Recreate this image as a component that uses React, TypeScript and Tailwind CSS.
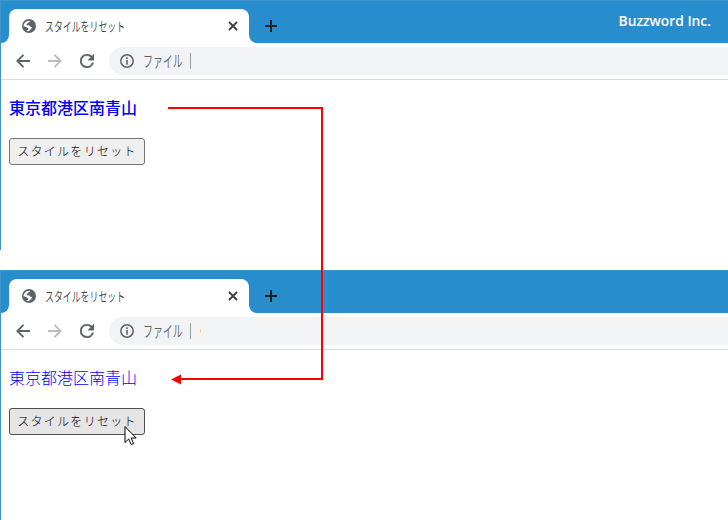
import React from 'react';

function Globe() {
  return (
    <svg className="h-[14px] w-[14px] shrink-0" viewBox="0 0 14 14">
      <circle cx="7" cy="7" r="7" fill="#5f6368" />
      <path d="M8.300 1.900C7.500 3 6.300 2.900 5.900 3.900C5.500 4.700 4.400 4.700 4.500 5.700C4.700 6.600 6.200 6 7.200 6.400C8.200 6.700 7.900 7.900 9 8C10.100 8.100 10.400 8.400 9.600 9.300C8.600 10.200 8.300 11.600 6.300 12.300C5.400 12.100 5 11.900 4.400 11.600C5.200 11 6.300 10.800 6.500 9.900C6.700 8.900 5.600 8.900 4.800 8.400C3.900 7.800 3.100 7.300 1.500 7.200C1.500 4.500 4.300 1.500 8.300 1.900z" fill="#fff" />
    </svg>
  );
}

function BrowserWindow({ brand, reset }: { brand?: boolean; reset?: boolean }) {
  return (
    <section className="h-[250px] w-full overflow-hidden border-l border-[#3f95cb] bg-white">
      <header className="flex h-[43px] items-end border-t border-[#3f95cb] bg-[#288dcd]">
        <div className="h-2 w-2 bg-white">
          <div className="h-full w-full rounded-br-lg bg-[#288dcd]" />
        </div>
        <div className="flex h-[34px] w-[240px] items-center rounded-t-lg bg-white pl-[13px]">
          <Globe />
          <div className="ml-[9px] w-[170px] origin-left scale-x-[0.685] text-[13px] leading-4 font-[350] whitespace-nowrap text-[#3c4043]">スタイルをリセット</div>
          <svg className="ml-[13px] h-[10px] w-[10px] shrink-0" viewBox="0 0 10 10"><path d="M1 1l8 8M9 1l-8 8" stroke="#3c4043" strokeWidth="1.8" /></svg>
        </div>
        <div className="h-2 w-2 bg-white">
          <div className="h-full w-full rounded-bl-lg bg-[#288dcd]" />
        </div>
        <svg className="mb-[11px] ml-[8px] h-3 w-3" viewBox="0 0 12 12"><path d="M6 0v12M0 6h12" stroke="#202124" strokeWidth="2" /></svg>
        {brand && <span className="mr-[17px] mb-3 ml-auto font-['Open_Sans'] text-[13.8px] leading-5 font-semibold text-white">Buzzword Inc.</span>}
      </header>
      <nav className="flex h-[37px] items-center border-b border-[#dadce0] pl-[15px]">
        <svg className="h-[14px] w-[14px]" viewBox="0 0 14 14" fill="none" stroke="#5f6368" strokeWidth="1.9"><path d="M14 7H1.5M7.5.8L1.3 7l6.2 6.2" /></svg>
        <svg className="ml-[18px] h-[14px] w-[14px]" viewBox="0 0 14 14" fill="none" stroke="#babcbe" strokeWidth="1.9"><path d="M0 7h12.5M6.5.8L12.7 7l-6.2 6.2" /></svg>
        <svg className="ml-[18px] h-[14px] w-[14px]" viewBox="4 4 16 16" fill="#5f6368" stroke="#5f6368" strokeWidth="0.4"><path d="M17.65 6.35A7.96 7.96 0 0 0 12 4a8 8 0 1 0 7.73 10h-2.08A6 6 0 1 1 12 6c1.66 0 3.14.69 4.22 1.78L13 11h7V4z" /></svg>
        <div className="ml-[15px] flex h-7 flex-1 items-center rounded-l-full bg-[#f1f3f4] pl-[11px]">
          <svg className="h-[14px] w-[14px] shrink-0" viewBox="0 0 14 14"><circle cx="7" cy="7" r="6.2" fill="none" stroke="#5f6368" strokeWidth="1.5" /><path d="M7 3.2v1.7M7 6v4.8" stroke="#5f6368" strokeWidth="1.6" /></svg>
          <div className="mb-[2px] ml-[9px] w-[47px] origin-left scale-x-[0.62] text-[16px] leading-5 font-[350] whitespace-nowrap text-[#5f6368]">ファイル</div>
          <div className="h-4 w-px bg-[#9aa0a6]" />
          {reset && <div className="ml-[9px] h-1 w-px bg-[#fbd398]" />}
        </div>
      </nav>
      <main className="flex flex-col items-start pt-[15px] pl-2">
        <p className={reset ? "text-[16px] leading-6 font-light text-[#0000ff]" : "text-[16px] leading-6 font-medium text-[#0000ff]"}>東京都港区南青山</p>
        <button className={reset ? "mt-[19px] h-[27px] w-[136px] rounded-[3px] border border-[#4f4f4f] bg-[#e5e5e5] pb-[2px] text-[12px] leading-5 font-light tracking-[1.3px] whitespace-nowrap text-black" : "mt-[19px] h-[27px] w-[136px] rounded-[3px] border border-[#767676] bg-[#efefef] pb-[2px] text-[12px] leading-5 font-light tracking-[1.3px] whitespace-nowrap text-black"}>スタイルをリセット</button>
      </main>
    </section>
  );
}

export default function App() {
  return (
    <div className="relative flex h-[520px] w-[728px] flex-col gap-5 overflow-hidden bg-white font-['Noto_Sans_CJK_JP',sans-serif]">
      <BrowserWindow brand />
      <BrowserWindow reset />
      <svg className="pointer-events-none absolute inset-0" width="728" height="520">
        <path d="M168 108H322V379H180" fill="none" stroke="#f00" strokeWidth="2" />
        <path d="M171 379.5l10-5v10z" fill="#f00" />
        <path d="M125 426.500v16l3.700-3.500 2.500 5.500 2.400-1-2.400-5.500h5z" fill="#fff" stroke="#000" strokeWidth="1" />
      </svg>
    </div>
  );
}
